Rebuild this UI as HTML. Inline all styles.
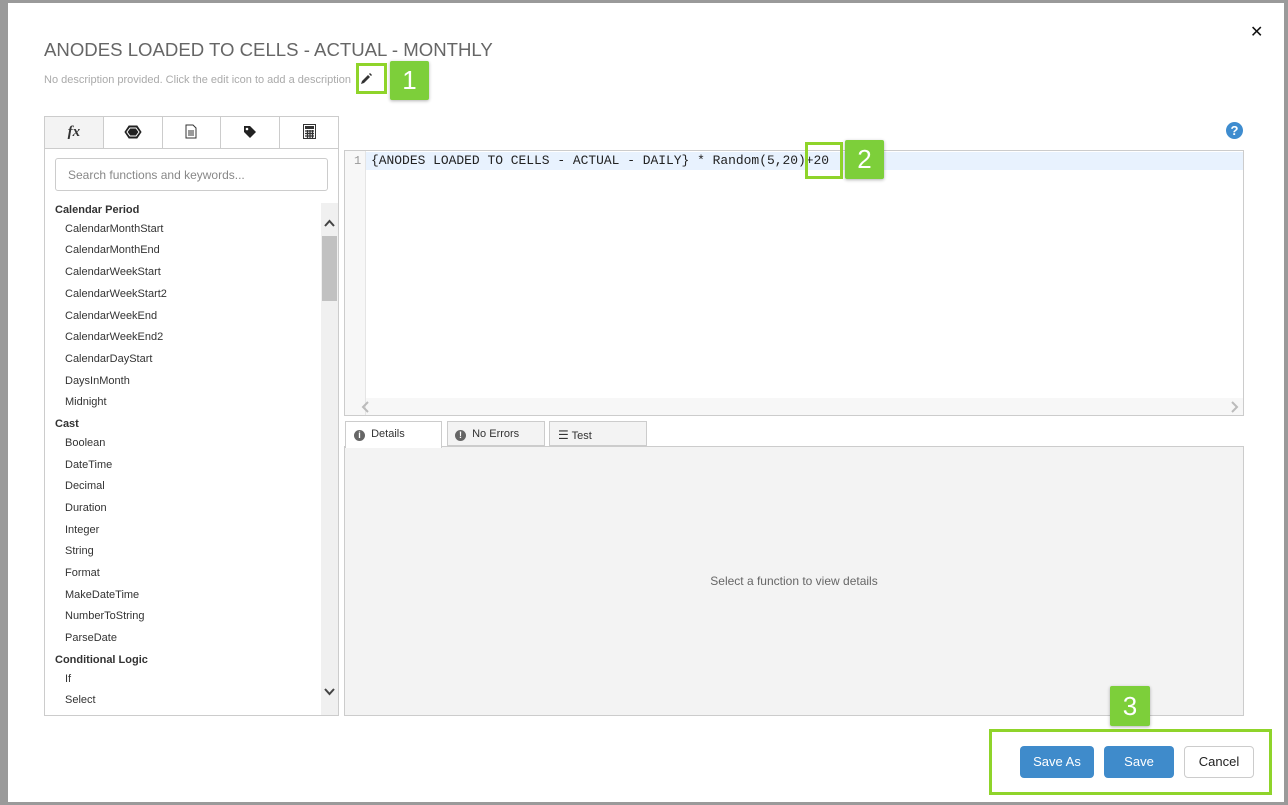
<!DOCTYPE html>
<html><head><style>
*{box-sizing:border-box;margin:0;padding:0}
body{width:1288px;height:805px;background:#9a9a9a;position:relative;overflow:hidden;font-family:"Liberation Sans",sans-serif;color:#333}
.m{position:absolute;left:8px;top:3px;width:1276px;height:799px;background:#fff}
.a{position:absolute}
.li{position:absolute;left:65px;font-size:11px;color:#333}
.h{position:absolute;left:55px;font-size:11px;font-weight:bold;color:#333}
.badge{position:absolute;background:#7dcf3a;color:#fff;font-size:26px;text-align:center;border-radius:2px;box-shadow:0 1px 3px rgba(0,0,0,.3)}
.gb{position:absolute;border:3px solid #8fd42a}
.btn{position:absolute;top:746px;height:32px;border-radius:4px;font-size:13px;text-align:center;line-height:32px}
</style></head><body>
<div class="m"></div>
<div class="a" style="left:44px;top:39px;font-size:18.6px;color:#666">ANODES LOADED TO CELLS - ACTUAL - MONTHLY</div>
<div class="a" style="left:44px;top:74px;font-size:11px;color:#aaa">No description provided. Click the edit icon to add a description</div>
<svg class="a" style="left:359px;top:72px" width="14" height="14" viewBox="0 0 14 14"><path d="M2 12l1-3 6-6 2 2-6 6z M10 2l1-1 2 2-1 1z" fill="#333"/></svg>
<div class="gb" style="left:356px;top:63px;width:31px;height:31px"></div>
<div class="badge" style="left:390px;top:61px;width:39px;height:39px;line-height:39px">1</div>
<div class="a" style="left:1250px;top:22px;font-size:16px;color:#111">✕</div>
<div class="a" style="left:1226px;top:122px;width:17px;height:17px;border-radius:50%;background:#3e8ccf;color:#fff;font-size:13px;font-weight:bold;text-align:center;line-height:17px">?</div>

<div class="a" style="left:44px;top:116px;width:295px;height:600px;border:1px solid #ccc"></div>
<div class="a" style="left:44px;top:116px;width:295px;height:33px;border:1px solid #ccc;display:flex">
 <div style="flex:1;background:#f3f3f3;border-right:1px solid #ccc;text-align:center;font:italic bold 15px 'Liberation Serif',serif;line-height:30px">fx</div>
 <div style="flex:1;border-right:1px solid #ccc;text-align:center;line-height:30px"><svg width="18" height="14" viewBox="0 0 18 14" style="vertical-align:middle"><polygon points="5,1 13,1 17,7 13,13 5,13 1,7" fill="#222" stroke="#222"/><polygon points="6,3 12,3 15,7 12,11 6,11 3,7" fill="#222" stroke="#fff" stroke-width="1"/></svg></div>
 <div style="flex:1;border-right:1px solid #ccc;text-align:center;line-height:30px"><svg width="12" height="15" viewBox="0 0 12 15" style="vertical-align:middle"><path d="M1 1h7l3 3v10H1z" fill="none" stroke="#333"/><path d="M3 7h6M3 9h6M3 11h6" stroke="#333"/></svg></div>
 <div style="flex:1;border-right:1px solid #ccc;text-align:center;line-height:30px"><svg width="14" height="14" viewBox="0 0 14 14" style="vertical-align:middle"><path d="M1 1h6l6 6-6 6-6-6z" fill="#222"/><circle cx="4" cy="4" r="1.3" fill="#fff"/></svg></div>
 <div style="flex:1;text-align:center;line-height:30px"><svg width="13" height="15" viewBox="0 0 13 15" style="vertical-align:middle"><rect x="0.5" y="0.5" width="12" height="14" fill="none" stroke="#333"/><rect x="2" y="2" width="9" height="3" fill="#333"/><path d="M2 7h9M2 9.5h9M2 12h9M4.5 6v8M7 6v8M9.5 6v8" stroke="#333" stroke-width="1.3"/></svg></div>
</div>
<div class="a" style="left:55px;top:158px;width:273px;height:33px;border:1px solid #ccc;border-radius:3px;font-size:12px;color:#888;padding:9px 12px">Search functions and keywords...</div>
<div class="a" style="left:321px;top:203px;width:17px;height:512px;background:#f0f0f0"></div>
<div class="a" style="left:322px;top:236px;width:15px;height:65px;background:#c1c1c1"></div>
<svg class="a" style="left:323px;top:218px" width="13" height="10" viewBox="0 0 13 10"><path d="M2 8l4.5-5 4.5 5" fill="none" stroke="#444" stroke-width="2"/></svg>
<svg class="a" style="left:323px;top:687px" width="13" height="10" viewBox="0 0 13 10"><path d="M2 2l4.5 5 4.5-5" fill="none" stroke="#444" stroke-width="2"/></svg>
<div class="h" style="top:204px">Calendar Period</div>
<div class="li" style="top:223px">CalendarMonthStart</div>
<div class="li" style="top:244px">CalendarMonthEnd</div>
<div class="li" style="top:266px">CalendarWeekStart</div>
<div class="li" style="top:288px">CalendarWeekStart2</div>
<div class="li" style="top:310px">CalendarWeekEnd</div>
<div class="li" style="top:331px">CalendarWeekEnd2</div>
<div class="li" style="top:353px">CalendarDayStart</div>
<div class="li" style="top:375px">DaysInMonth</div>
<div class="li" style="top:396px">Midnight</div>
<div class="h" style="top:418px">Cast</div>
<div class="li" style="top:437px">Boolean</div>
<div class="li" style="top:459px">DateTime</div>
<div class="li" style="top:480px">Decimal</div>
<div class="li" style="top:502px">Duration</div>
<div class="li" style="top:524px">Integer</div>
<div class="li" style="top:545px">String</div>
<div class="li" style="top:567px">Format</div>
<div class="li" style="top:589px">MakeDateTime</div>
<div class="li" style="top:610px">NumberToString</div>
<div class="li" style="top:632px">ParseDate</div>
<div class="h" style="top:654px">Conditional Logic</div>
<div class="li" style="top:673px">If</div>
<div class="li" style="top:694px">Select</div>

<div class="a" style="left:344px;top:150px;width:900px;height:266px;border:1px solid #ccc"></div>
<div class="a" style="left:345px;top:151px;width:21px;height:264px;background:#f7f7f7;border-right:1px solid #e5e5e5"></div>
<div class="a" style="left:366px;top:152px;width:877px;height:18px;background:#e8f2fe"></div>
<div class="a" style="left:354px;top:154px;font:12px 'Liberation Mono',monospace;color:#999">1</div>
<div class="a" style="left:371px;top:153px;font:12.95px 'Liberation Mono',monospace;color:#222">{ANODES LOADED TO CELLS - ACTUAL - DAILY} * Random(5,20)+20</div>
<div class="a" style="left:366px;top:398px;width:877px;height:17px;background:#f7f7f7"></div>
<svg class="a" style="left:361px;top:401px" width="10" height="12" viewBox="0 0 10 12"><path d="M7 1l-5 5 5 5" fill="none" stroke="#bbb" stroke-width="2"/></svg>
<svg class="a" style="left:1229px;top:401px" width="10" height="12" viewBox="0 0 10 12"><path d="M3 1l5 5-5 5" fill="none" stroke="#bbb" stroke-width="2"/></svg>
<div class="gb" style="left:805px;top:142px;width:38px;height:37px"></div>
<div class="badge" style="left:845px;top:140px;width:39px;height:39px;line-height:39px">2</div>

<div class="a" style="left:344px;top:446px;width:900px;height:270px;background:#f3f3f3;border:1px solid #ccc"></div>
<div class="a" style="left:345px;top:421px;width:97px;height:27px;background:#fff;border:1px solid #ccc;border-bottom:none;font-size:11px;padding:6px 0 0 8px"><span style="display:inline-block;width:11px;height:11px;border-radius:50%;background:#666;color:#fff;font-size:9px;text-align:center;line-height:11px;font-weight:bold;vertical-align:-1px">i</span>&nbsp; Details</div>
<div class="a" style="left:447px;top:421px;width:98px;height:25px;background:#f3f3f3;border:1px solid #ccc;font-size:11px;padding:6px 0 0 7px"><span style="display:inline-block;width:11px;height:11px;border-radius:50%;background:#666;color:#fff;font-size:9px;text-align:center;line-height:11px;font-weight:bold;vertical-align:-1px">!</span>&nbsp; No Errors</div>
<div class="a" style="left:549px;top:421px;width:98px;height:25px;background:#f3f3f3;border:1px solid #ccc;font-size:11px;padding:6px 0 0 8px"><span style="font-size:12px">☰</span> Test</div>
<div class="a" style="left:344px;top:574px;width:900px;text-align:center;font-size:12px;color:#666">Select a function to view details</div>

<div class="gb" style="left:989px;top:729px;width:283px;height:66px"></div>
<div class="badge" style="left:1110px;top:686px;width:40px;height:40px;line-height:40px">3</div>
<div class="btn" style="left:1020px;width:74px;background:#3f8bcb;color:#fff">Save As</div>
<div class="btn" style="left:1104px;width:70px;background:#3f8bcb;color:#fff">Save</div>
<div class="btn" style="left:1184px;width:70px;background:#fff;border:1px solid #ccc;color:#222;line-height:30px">Cancel</div>
</body></html>
